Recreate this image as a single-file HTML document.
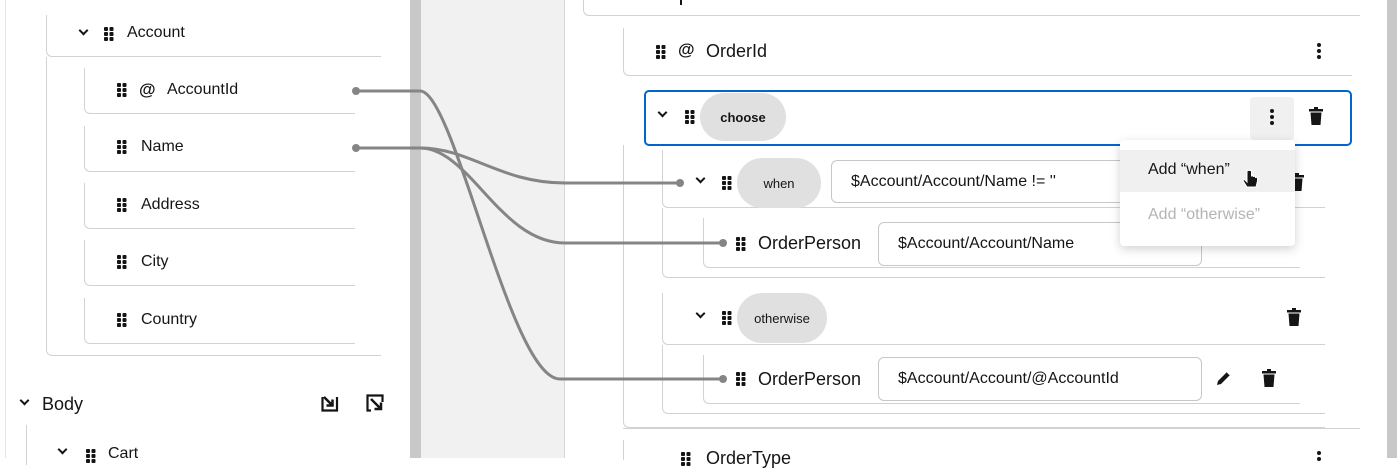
<!DOCTYPE html>
<html><head><meta charset="utf-8"><style>
*{box-sizing:border-box;margin:0;padding:0}
body{width:1397px;height:458px;overflow:hidden;background:#fff;font-family:"Liberation Sans",sans-serif;color:#151515;position:relative}
.a{position:absolute}
.t{position:absolute;white-space:nowrap}
.card{position:absolute;border-left:1px solid #d2d2d2;border-bottom:1px solid #d2d2d2;border-bottom-left-radius:6px}
.grip{position:absolute;width:4px;height:4px;background:#151515;border-radius:1px;
box-shadow:5.5px 0 #151515,0 5px #151515,5.5px 5px #151515,0 10px #151515,5.5px 10px #151515}
.pill{position:absolute;background:#e0e0e0;border-radius:26px;font-size:13px;display:flex;align-items:center;justify-content:center}
.inp{position:absolute;border:1px solid #c7c7c7;border-radius:6px;font-size:16px;padding-left:19px;display:flex;align-items:center;background:#fff}
.chev{position:absolute;width:7px;height:7px;border-right:2.5px solid #151515;border-bottom:2.5px solid #151515;transform:rotate(45deg)}
</style></head><body>
<div class="a" style="left:5px;top:0;width:1px;height:458px;background:#e4e4e4"></div>
<div class="a" style="left:410px;top:0;width:11px;height:458px;background:#c8c8c8"></div>
<div class="a" style="left:421px;top:0;width:143px;height:458px;background:#f1f1f1"></div>
<div class="a" style="left:564px;top:0;width:1px;height:458px;background:#d6d6d6"></div>
<div class="a" style="left:1387px;top:0;width:10px;height:458px;background:#c8c8c8"></div>

<div class="card" style="left:46px;top:15px;width:335px;height:42px"></div>
<div class="chev" style="left:80px;top:27px"></div>
<div class="grip" style="left:104px;top:27px"></div>
<div class="t" style="left:127px;top:24px;font-size:16px">Account</div>
<div class="card" style="left:46px;top:57px;width:335px;height:299px"></div>

<div class="card" style="left:84px;top:68px;width:271px;height:46px"></div>
<div class="grip" style="left:117px;top:83px"></div>
<div class="t" style="left:139px;top:80px;font-size:17px;font-weight:bold">@</div>
<div class="t" style="left:167px;top:81px;font-size:16px">AccountId</div>
<div class="card" style="left:84px;top:126px;width:271px;height:46px"></div>
<div class="grip" style="left:117px;top:140px"></div>
<div class="t" style="left:141px;top:138px;font-size:16px">Name</div>
<div class="card" style="left:84px;top:183px;width:271px;height:46px"></div>
<div class="grip" style="left:117px;top:198px"></div>
<div class="t" style="left:141px;top:196px;font-size:16px">Address</div>
<div class="card" style="left:84px;top:240px;width:271px;height:46px"></div>
<div class="grip" style="left:117px;top:255px"></div>
<div class="t" style="left:141px;top:253px;font-size:16px">City</div>
<div class="card" style="left:84px;top:298px;width:271px;height:46px"></div>
<div class="grip" style="left:117px;top:313px"></div>
<div class="t" style="left:141px;top:311px;font-size:16px">Country</div>

<div class="chev" style="left:21px;top:397px"></div>
<div class="t" style="left:42px;top:394px;font-size:18px">Body</div>
<svg class="a" style="left:321px;top:394px" width="18" height="18" viewBox="0 0 18 18"><path d="M1.5 3V16.5H16V3" fill="none" stroke="#151515" stroke-width="2.2"/><path d="M3 3L11 11M11.5 5.5V11.5H5.5" fill="none" stroke="#151515" stroke-width="2.5"/></svg>
<svg class="a" style="left:366px;top:394px" width="18" height="18" viewBox="0 0 18 18"><path d="M5 16.5H1.5V1.5H16.5V8" fill="none" stroke="#151515" stroke-width="2.2"/><path d="M5 5L14 14M15 8.5V15H8.5" fill="none" stroke="#151515" stroke-width="2.5"/></svg>
<div class="a" style="left:26px;top:425px;width:1px;height:40px;background:#d2d2d2"></div>
<div class="chev" style="left:59px;top:446px"></div>
<div class="grip" style="left:86px;top:449px"></div>
<div class="t" style="left:108px;top:445px;font-size:16px">Cart</div>

<div class="card" style="left:583px;top:-10px;width:777px;height:26px"></div>
<div class="a" style="left:680px;top:0;width:2px;height:5px;background:#151515"></div>

<div class="card" style="left:623px;top:28px;width:729px;height:48px"></div>
<div class="grip" style="left:656px;top:45px"></div>
<div class="t" style="left:678px;top:40px;font-size:17px;font-weight:bold">@</div>
<div class="t" style="left:706px;top:41px;font-size:18px">OrderId</div>
<svg class="a" style="left:1314px;top:42px" width="10" height="18"><circle cx="5" cy="3" r="2" fill="#151515"/><circle cx="5" cy="9" r="2" fill="#151515"/><circle cx="5" cy="15" r="2" fill="#151515"/></svg>

<div class="card" style="left:623px;top:145px;width:702px;height:283px"></div>
<div class="a" style="left:644px;top:90px;width:708px;height:56px;border:2px solid #0066cc;border-radius:5px;background:#fff"></div>
<div class="chev" style="left:659px;top:109px"></div>
<div class="grip" style="left:685px;top:110px"></div>
<div class="pill" style="left:700px;top:93px;width:86px;height:48px;font-weight:bold">choose</div>
<div class="a" style="left:1250px;top:97px;width:44px;height:43px;background:#f0f0f0;border-radius:4px"></div>
<svg class="a" style="left:1267px;top:108px" width="10" height="18"><circle cx="5" cy="3" r="2" fill="#151515"/><circle cx="5" cy="9" r="2" fill="#151515"/><circle cx="5" cy="15" r="2" fill="#151515"/></svg>
<svg class="a" style="left:1309px;top:107px" width="14" height="18" viewBox="0 0 14 18"><rect x="0" y="2" width="14" height="2.5" fill="#151515"/><rect x="5" y="0" width="4" height="3" fill="#151515"/><path d="M1.5 5.5H12.5L11.5 18H2.5Z" fill="#151515"/></svg>

<div class="card" style="left:662px;top:150px;width:663px;height:58px"></div>
<div class="chev" style="left:697px;top:175px"></div>
<div class="grip" style="left:722px;top:176px"></div>
<div class="pill" style="left:737px;top:158px;width:84px;height:50px">when</div>
<div class="inp" style="left:831px;top:160px;width:300px;height:43px">$Account/Account/Name != ''</div>
<svg class="a" style="left:1290px;top:173px" width="14" height="18" viewBox="0 0 14 18"><rect x="0" y="2" width="14" height="2.5" fill="#151515"/><rect x="5" y="0" width="4" height="3" fill="#151515"/><path d="M1.5 5.5H12.5L11.5 18H2.5Z" fill="#151515"/></svg>
<div class="card" style="left:662px;top:208px;width:663px;height:70px"></div>
<div class="card" style="left:703px;top:218px;width:597px;height:50px"></div>
<div class="grip" style="left:736px;top:237px"></div>
<div class="t" style="left:758px;top:233px;font-size:18px">OrderPerson</div>
<div class="inp" style="left:878px;top:222px;width:324px;height:44px">$Account/Account/Name</div>

<div class="card" style="left:662px;top:293px;width:663px;height:52px"></div>
<div class="chev" style="left:697px;top:310px"></div>
<div class="grip" style="left:722px;top:311px"></div>
<div class="pill" style="left:737px;top:293px;width:90px;height:50px">otherwise</div>
<svg class="a" style="left:1287px;top:308px" width="14" height="18" viewBox="0 0 14 18"><rect x="0" y="2" width="14" height="2.5" fill="#151515"/><rect x="5" y="0" width="4" height="3" fill="#151515"/><path d="M1.5 5.5H12.5L11.5 18H2.5Z" fill="#151515"/></svg>
<div class="card" style="left:662px;top:345px;width:663px;height:69px"></div>
<div class="card" style="left:703px;top:355px;width:597px;height:49px"></div>
<div class="grip" style="left:736px;top:372px"></div>
<div class="t" style="left:758px;top:369px;font-size:18px">OrderPerson</div>
<div class="inp" style="left:878px;top:357px;width:324px;height:44px">$Account/Account/@AccountId</div>
<svg class="a" style="left:1215px;top:369px" width="18" height="18" viewBox="0 0 18 18"><path d="M3 12L12 3L15 6L6 15L2 16Z" fill="#151515"/><path d="M12 3L15 6" stroke="#fff" stroke-width="1"/></svg>
<svg class="a" style="left:1262px;top:369px" width="14" height="18" viewBox="0 0 14 18"><rect x="0" y="2" width="14" height="2.5" fill="#151515"/><rect x="5" y="0" width="4" height="3" fill="#151515"/><path d="M1.5 5.5H12.5L11.5 18H2.5Z" fill="#151515"/></svg>

<div class="a" style="left:623px;top:428px;width:737px;height:1px;background:#d2d2d2"></div>
<div class="a" style="left:623px;top:440px;width:1px;height:20px;background:#d2d2d2"></div>
<div class="grip" style="left:681px;top:452px"></div>
<div class="t" style="left:706px;top:448px;font-size:18px">OrderType</div>
<svg class="a" style="left:1314px;top:450px" width="10" height="18"><circle cx="5" cy="3" r="2" fill="#151515"/><circle cx="5" cy="9" r="2" fill="#151515"/></svg>

<div class="a" style="left:1120px;top:140px;width:175px;height:106px;background:#fff;border-radius:4px;box-shadow:0 3px 10px rgba(0,0,0,.18)"></div>
<div class="a" style="left:1120px;top:150px;width:175px;height:42px;background:#f0f0f0"></div>
<div class="t" style="left:1148px;top:161px;font-size:16px">Add “when”</div>
<div class="t" style="left:1148px;top:206px;font-size:16px;color:#b4b4b4">Add “otherwise”</div>
<svg class="a" style="left:1242px;top:170px" width="18" height="22" viewBox="0 0 18 22"><path d="M5 1.5V12L3 10C2 9 0.5 10 1.5 11.5L5 17H14L15.5 11V8C15.5 7 13.5 7 13.5 8V7C13.5 6 11.5 6 11.5 7V6.5C11.5 5.5 9.5 5.5 9.5 6.5V1.5C9.5 0 5 0 5 1.5Z" fill="#151515" stroke="#fff" stroke-width="1"/></svg>

<svg class="a" style="left:0;top:0" width="1397" height="458">
<g fill="none" stroke="#858585" stroke-width="3">
<path d="M356 91H420C455 91 510 379 560 379H723"/>
<path d="M356 148H420C470 148 500 183 565 183H680"/>
<path d="M356 148H420C470 148 500 243 565 243H723"/>
</g>
<g fill="#858585"><circle cx="356" cy="91" r="4"/><circle cx="356" cy="148" r="4"/><circle cx="680" cy="183" r="4"/><circle cx="723" cy="243" r="4"/><circle cx="723" cy="379" r="4"/></g>
</svg>
</body></html>
